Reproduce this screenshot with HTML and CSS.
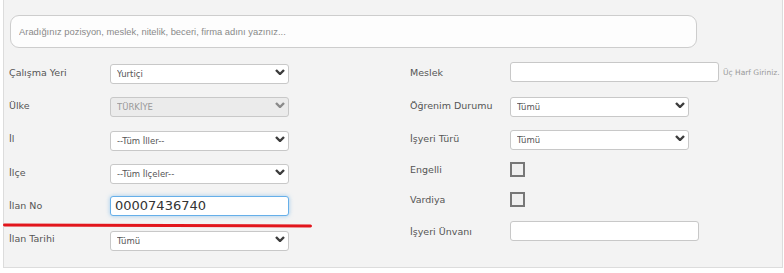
FILE: index.html
```html
<!DOCTYPE html>
<html lang="tr">
<head>
  <meta charset="UTF-8">
  <title>İlan Arama</title>
  <link rel="stylesheet" href="styles.css">
</head>
<body>
  <div class="panel">
    <input class="search" type="text" placeholder="Aradığınız pozisyon, meslek, nitelik, beceri, firma adını yazınız...">

    <div class="columns">
      <div class="col col-left">
        <div class="row">
          <label>Çalışma Yeri</label>
          <div class="select-wrap">
            <select><option>Yurtiçi</option></select>
            <svg class="chevron" viewBox="0 0 10 6"><path d="M1 1 L5 5 L9 1"/></svg>
          </div>
        </div>
        <div class="row">
          <label>Ülke</label>
          <div class="select-wrap disabled">
            <select disabled><option>TÜRKİYE</option></select>
            <svg class="chevron" viewBox="0 0 10 6"><path d="M1 1 L5 5 L9 1"/></svg>
          </div>
        </div>
        <div class="row">
          <label>İl</label>
          <div class="select-wrap">
            <select><option>--Tüm İller--</option></select>
            <svg class="chevron" viewBox="0 0 10 6"><path d="M1 1 L5 5 L9 1"/></svg>
          </div>
        </div>
        <div class="row">
          <label>İlçe</label>
          <div class="select-wrap">
            <select><option>--Tüm İlçeler--</option></select>
            <svg class="chevron" viewBox="0 0 10 6"><path d="M1 1 L5 5 L9 1"/></svg>
          </div>
        </div>
        <div class="row">
          <label>İlan No</label>
          <input class="text focus" type="text" value="00007436740">
        </div>
        <div class="row">
          <label>İlan Tarihi</label>
          <div class="select-wrap">
            <select><option>Tümü</option></select>
            <svg class="chevron" viewBox="0 0 10 6"><path d="M1 1 L5 5 L9 1"/></svg>
          </div>
        </div>
      </div>

      <div class="col col-right">
        <div class="row r1">
          <label>Meslek</label>
          <input class="text wide" type="text">
          <span class="hint">Üç Harf Giriniz.</span>
        </div>
        <div class="row r2">
          <label>Öğrenim Durumu</label>
          <div class="select-wrap">
            <select><option>Tümü</option></select>
            <svg class="chevron" viewBox="0 0 10 6"><path d="M1 1 L5 5 L9 1"/></svg>
          </div>
        </div>
        <div class="row r3">
          <label>İşyeri Türü</label>
          <div class="select-wrap">
            <select><option>Tümü</option></select>
            <svg class="chevron" viewBox="0 0 10 6"><path d="M1 1 L5 5 L9 1"/></svg>
          </div>
        </div>
        <div class="row r4">
          <label>Engelli</label>
          <span class="check"></span>
        </div>
        <div class="row r5">
          <label>Vardiya</label>
          <span class="check"></span>
        </div>
        <div class="row r6">
          <label>İşyeri Ünvanı</label>
          <input class="text title" type="text">
        </div>
      </div>
    </div>

    <!-- işaretleme çizgisi -->
    <div class="mark"></div>
  </div>
</body>
</html>
```

FILE: styles.css
```css
* {
  box-sizing: border-box;
}

body {
  margin: 0;
  background-color: #ffffff;
  font-family: "DejaVu Sans", Verdana, sans-serif;
  color: #555;
}

.panel {
  position: relative;
  margin-left: 3px;
  width: 780px;
  height: 268px;
  padding: 15px 2px 0 5px;
  background-color: #f3f3f3;
  border: 1px solid #dcdcdc;
  border-top: none;
}

.search {
  display: block;
  width: 687px;
  height: 33px;
  margin: 0 0 0 1px;
  padding: 0 8px;
  font-family: "Liberation Sans", Arial, sans-serif;
  font-size: 9.4px;
  background-color: #fdfdfd;
  border: 1px solid #cdcdcd;
  border-radius: 9px;
  outline: none;
}

.search::placeholder {
  color: #8a8a8a;
}

.columns {
  display: grid;
  grid-template-columns: 401px 1fr;
  margin-top: 14px;
}

.col {
  display: flex;
  flex-direction: column;
}

.col-left {
  gap: 13.4px;
}

.row {
  display: flex;
  align-items: center;
  height: 20px;
}

.row label {
  width: 101px;
  flex-shrink: 0;
  font-size: 9.5px;
  color: #555;
}

.col-right .row label {
  width: 100px;
}

.r2 { margin-top: 13px; }
.r3 { margin-top: 13px; }
.r4 { margin-top: 11px; }
.r5 { margin-top: 10px; }
.r6 { margin-top: 12px; }

.select-wrap {
  position: relative;
  width: 179px;
  height: 20px;
}

.select-wrap select {
  width: 100%;
  height: 100%;
  margin: 0;
  padding: 0 6px;
  font-family: "DejaVu Sans", Verdana, sans-serif;
  font-size: 8.5px;
  color: #555;
  background-color: #fff;
  border: 1px solid #c8c8c8;
  border-radius: 3px;
  appearance: none;
  -webkit-appearance: none;
}

.select-wrap.disabled select {
  background-color: #ebebeb;
  color: #999;
  opacity: 1;
}

.chevron {
  position: absolute;
  right: 4px;
  top: 7px;
  width: 10px;
  height: 6px;
  fill: none;
  stroke: #3c3c3c;
  stroke-width: 2.4;
}

.disabled .chevron {
  stroke: #8a8a8a;
}

.text {
  height: 20px;
  margin: 0;
  padding: 0 4px;
  font-family: "DejaVu Sans", Verdana, sans-serif;
  background-color: #fff;
  border: 1px solid #c8c8c8;
  border-radius: 3px;
  outline: none;
}

.text.focus {
  width: 179px;
  font-size: 13px;
  color: #333;
  border-color: #66afe9;
  box-shadow: 0 0 4px rgba(102, 175, 233, 0.6);
}

.text.wide {
  width: 209px;
}

.text.title {
  width: 189px;
}

.hint {
  margin-left: 4px;
  font-size: 7.5px;
  color: #999;
  white-space: nowrap;
}

.check {
  display: block;
  width: 15px;
  height: 15px;
  background-color: #f0f0f0;
  border: 2px solid #777;
}

.mark {
  position: absolute;
  left: -1px;
  top: 224px;
  width: 309px;
  height: 3px;
  background-color: #e2161c;
  border-radius: 2px;
  transform: rotate(0.2deg);
}
```
